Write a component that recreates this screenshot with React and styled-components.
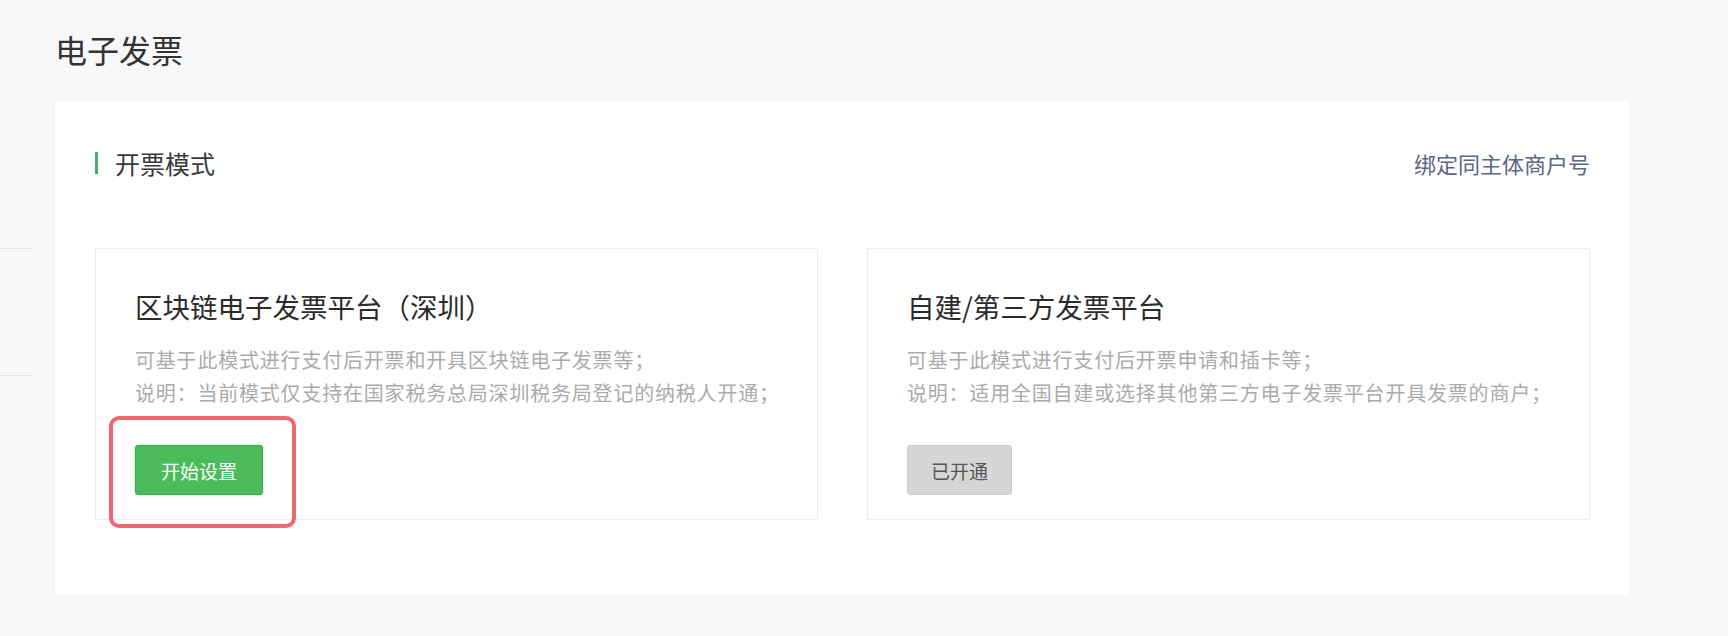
import React from 'react';
import styled, { createGlobalStyle } from 'styled-components';

const GlobalStyle = createGlobalStyle`
  html, body {
    margin: 0;
    padding: 0;
    background: #f8f8f8;
    font-family: "Noto Sans CJK SC", "Noto Sans", sans-serif;
  }
`;

const Page = styled.div`
  display: flex;
  width: 1728px;
  height: 636px;
  overflow: hidden;
  background: #f8f8f8;
`;

const SideNav = styled.div`
  width: 32px;
  margin-right: 23px;
  padding-top: 248px;
  display: flex;
  flex-direction: column;
`;

const SideItem = styled.div`
  height: 126px;
  border-top: 1px solid #e4e4e4;
  border-bottom: 1px solid #e4e4e4;
`;

const Main = styled.div`
  display: flex;
  flex-direction: column;
  width: 1574px;
`;

const PageTitle = styled.h1`
  margin: 0;
  padding-top: 28px;
  height: 101px;
  box-sizing: border-box;
  font-size: 32px;
  line-height: 42px;
  font-weight: 400;
  color: #333;
`;

const Panel = styled.div`
  background: #fff;
  padding: 42px 39px 75px 40px;
  box-shadow: 0 0 3px rgba(0, 0, 0, 0.04);
`;

const HeaderRow = styled.div`
  display: flex;
  align-items: center;
  justify-content: space-between;
  height: 40px;
  margin-bottom: 65px;
`;

const SectionTitle = styled.div`
  display: flex;
  align-items: center;
  font-size: 25px;
  color: #3a3a3a;

  &::before {
    content: '';
    width: 3px;
    height: 22px;
    background: #3dae6b;
    margin-right: 17px;
  }
`;

const LinkText = styled.a`
  font-size: 22px;
  color: #5b6784;
  text-decoration: none;
  cursor: pointer;
`;

const CardRow = styled.div`
  display: grid;
  grid-template-columns: minmax(0, 1fr) minmax(0, 1fr);
  gap: 49px;
`;

const Card = styled.div`
  border: 1px solid #ededed;
  height: 272px;
  box-sizing: border-box;
  padding: 39px 39px 0;
  display: flex;
  flex-direction: column;
  min-width: 0;
`;

const CardTitle = styled.div`
  font-size: 27.5px;
  line-height: 36px;
  color: #2b2b2b;
  margin-bottom: 19px;
`;

const Desc = styled.div`
  font-size: 20px;
  letter-spacing: 0.8px;
  line-height: 33px;
  color: #ababab;
  white-space: nowrap;
`;

const ButtonWrap = styled.div`
  position: relative;
  align-self: flex-start;
  margin-top: 36px;
`;

const Button = styled.button`
  height: 50px;
  padding: 0 ${p => (p.done ? 23 : 25)}px;
  border: 1px solid ${p => (p.done ? '#cfcfcf' : '#41a852')};
  border-radius: 3px;
  background: ${p => (p.done ? '#d6d6d6' : '#4cbb5b')};
  color: ${p => (p.done ? '#555' : '#fff')};
  font-family: inherit;
  font-size: 19px;
  cursor: ${p => (p.done ? 'default' : 'pointer')};
  box-shadow: ${p => (p.done ? 'none' : '0 0 3px rgba(76, 187, 91, 0.5)')};
`;

const Highlight = styled.div`
  position: absolute;
  left: -26px;
  right: -33px;
  top: -29px;
  bottom: -33px;
  border: 4px solid #ee6670;
  border-radius: 10px;
  pointer-events: none;
`;

const modes = [
  {
    title: '区块链电子发票平台（深圳）',
    lines: [
      '可基于此模式进行支付后开票和开具区块链电子发票等；',
      '说明：当前模式仅支持在国家税务总局深圳税务局登记的纳税人开通；',
    ],
    button: '开始设置',
    done: false,
    highlight: true,
  },
  {
    title: '自建/第三方发票平台',
    lines: [
      '可基于此模式进行支付后开票申请和插卡等；',
      '说明：适用全国自建或选择其他第三方电子发票平台开具发票的商户；',
    ],
    button: '已开通',
    done: true,
    highlight: false,
  },
];

const App = () => {
  return (
    <Page>
      <GlobalStyle />
      <SideNav>
        <SideItem />
      </SideNav>
      <Main>
        <PageTitle>电子发票</PageTitle>
        <Panel>
          <HeaderRow>
            <SectionTitle>开票模式</SectionTitle>
            <LinkText>绑定同主体商户号</LinkText>
          </HeaderRow>
          <CardRow>
            {modes.map(m => (
              <Card key={m.title}>
                <CardTitle>{m.title}</CardTitle>
                {m.lines.map(l => (
                  <Desc key={l}>{l}</Desc>
                ))}
                <ButtonWrap>
                  <Button done={m.done}>{m.button}</Button>
                  {m.highlight && <Highlight />}
                </ButtonWrap>
              </Card>
            ))}
          </CardRow>
        </Panel>
      </Main>
    </Page>
  );
};

export default App;
